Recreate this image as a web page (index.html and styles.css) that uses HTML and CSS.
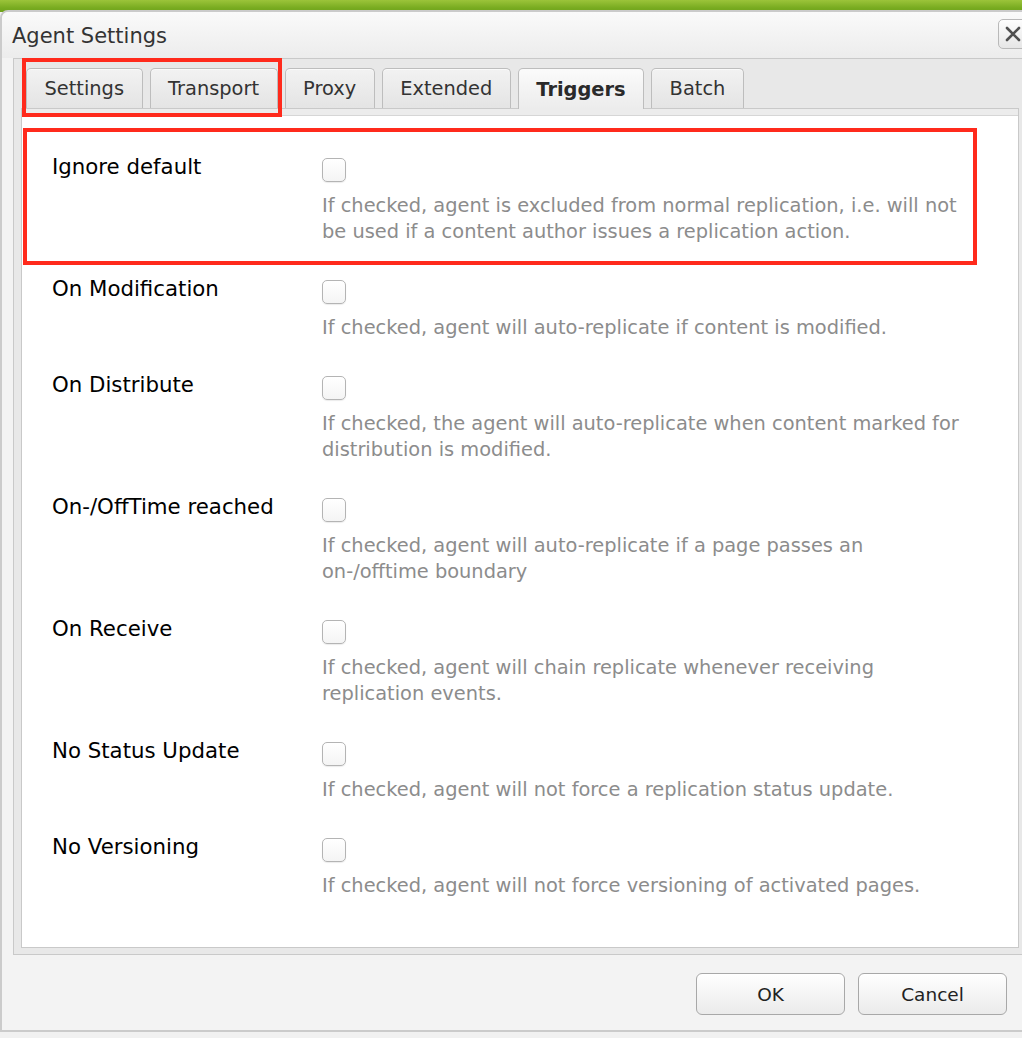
FILE: index.html
```html
<!DOCTYPE html>
<html lang="en">
<head>
<meta charset="utf-8">
<title>Agent Settings</title>
<link rel="stylesheet" href="styles.css">
</head>
<body>
<div class="screen">
  <div class="window">
    <div class="header">
      <span class="title">Agent Settings</span>
      <button class="close" aria-label="Close">
        <svg width="18" height="18" viewBox="0 0 18 18"><path d="M3 3 L15 15 M15 3 L3 15" stroke="#505050" stroke-width="2.6" stroke-linecap="round" fill="none"/></svg>
      </button>
    </div>
    <div class="panel">
      <div class="tabstrip">
        <div class="tab">Settings</div>
        <div class="tab">Transport</div>
        <div class="tab tab-proxy">Proxy</div>
        <div class="tab">Extended</div>
        <div class="tab active">Triggers</div>
        <div class="tab">Batch</div>
      </div>
      <div class="bodywrap">
        <div class="tabbody">
          <div class="row">
            <div class="label">Ignore default</div>
            <div class="field">
              <span class="checkbox"></span>
              <div class="desc">If checked, agent is excluded from normal replication, i.e. will not<br>be used if a content author issues a replication action.</div>
            </div>
          </div>
          <div class="row">
            <div class="label">On Modification</div>
            <div class="field">
              <span class="checkbox"></span>
              <div class="desc">If checked, agent will auto-replicate if content is modified.</div>
            </div>
          </div>
          <div class="row">
            <div class="label">On Distribute</div>
            <div class="field">
              <span class="checkbox"></span>
              <div class="desc">If checked, the agent will auto-replicate when content marked for<br>distribution is modified.</div>
            </div>
          </div>
          <div class="row">
            <div class="label">On-/OffTime reached</div>
            <div class="field">
              <span class="checkbox"></span>
              <div class="desc">If checked, agent will auto-replicate if a page passes an<br>on-/offtime boundary</div>
            </div>
          </div>
          <div class="row">
            <div class="label">On Receive</div>
            <div class="field">
              <span class="checkbox"></span>
              <div class="desc">If checked, agent will chain replicate whenever receiving<br>replication events.</div>
            </div>
          </div>
          <div class="row">
            <div class="label">No Status Update</div>
            <div class="field">
              <span class="checkbox"></span>
              <div class="desc">If checked, agent will not force a replication status update.</div>
            </div>
          </div>
          <div class="row">
            <div class="label">No Versioning</div>
            <div class="field">
              <span class="checkbox"></span>
              <div class="desc">If checked, agent will not force versioning of activated pages.</div>
            </div>
          </div>
        </div>
      </div>
    </div>
    <div class="footer">
      <button class="btn">OK</button>
      <button class="btn">Cancel</button>
    </div>
  </div>
  <div class="mark mark-tabs"></div>
  <div class="mark mark-row"></div>
</div>
</body>
</html>
```
FILE: styles.css
```css
html, body {
  margin: 0;
  padding: 0;
  overflow: hidden;
}
body {
  width: 1022px;
  height: 1038px;
  font-family: "DejaVu Sans", Verdana, sans-serif;
  background: #f0f0f0;
}
.screen {
  position: relative;
  width: 1022px;
  height: 1038px;
  overflow: hidden;
  background: linear-gradient(to bottom, #9cc43a 0, #78ab20 8px, #6fa31c 12px, #f1f1f1 12px);
}
.window {
  margin-top: 10px;
  width: 1040px;
  box-sizing: border-box;
  border: 2px solid #cbcbcb;
  border-radius: 8px 8px 0 0;
  background: #f3f3f3;
}
.header {
  height: 46px;
  display: flex;
  align-items: center;
  justify-content: space-between;
  padding: 0 10px;
  background: linear-gradient(to bottom, #fafafa, #ececec);
  border-radius: 6px 6px 0 0;
}
.title {
  font-size: 21px;
  color: #333;
  position: relative;
  top: 1px;
}
.close {
  width: 30px;
  height: 30px;
  margin-top: -2px;
  padding: 0;
  display: flex;
  align-items: center;
  justify-content: center;
  border: 1px solid #b9b9b9;
  border-radius: 5px;
  background: linear-gradient(to bottom, #fdfdfd, #e6e6e6);
}
.panel {
  margin: 0 11px;
  border: 1px solid #c9c9c9;
  background: #e8e8e8;
  padding: 0 7px 6px 7px;
}
.tabstrip {
  display: flex;
  gap: 7px;
  padding: 9px 0 0 5px;
  height: 40px;
}
.tab {
  height: 40px;
  box-sizing: border-box;
  padding: 0 17.5px;
  display: flex;
  align-items: center;
  justify-content: center;
  font-size: 19.4px;
  color: #333;
  border: 1px solid #bdbdbd;
  border-bottom: none;
  border-radius: 5px 5px 0 0;
  background: linear-gradient(to bottom, #f2f2f2, #e4e4e4);
  box-shadow: inset 0 1px 0 #fafafa;
}
.tab-proxy {
  min-width: 90px;
}
.tab.active {
  font-weight: bold;
  color: #2a2a2a;
  height: 41px;
  position: relative;
  z-index: 1;
  background: linear-gradient(to bottom, #fbfbfb, #ececec);
}
.bodywrap {
  border: 1px solid #c9c9c9;
  background: #ececec;
  padding-top: 6px;
}
.tabbody {
  height: 832px;
  box-sizing: border-box;
  background: #fff;
  border-top: 1px solid #d6d6d6;
  padding: 7px 0 0 30px;
}
.row {
  display: flex;
  padding-top: 35px;
}
.label {
  width: 270px;
  flex: none;
  font-size: 21.3px;
  line-height: 24px;
  margin-top: -3px;
  color: #000;
}
.field {
  display: flex;
  flex-direction: column;
  align-items: flex-start;
}
.checkbox {
  width: 24px;
  height: 24px;
  box-sizing: border-box;
  border: 1px solid #b4b4b4;
  border-radius: 5px;
  background: linear-gradient(to bottom, #ffffff, #f4f4f4);
  box-shadow: 0 1px 1px rgba(0,0,0,0.08);
}
.desc {
  margin-top: 11px;
  font-size: 19.4px;
  line-height: 26px;
  color: #8c8c8c;
  white-space: nowrap;
}
.footer {
  height: 75px;
  display: flex;
  justify-content: flex-end;
  align-items: flex-start;
  gap: 13px;
  padding: 18px 31px 0 0;
  box-sizing: border-box;
}
.btn {
  width: 149px;
  height: 42px;
  border: 1px solid #a8a8a8;
  border-radius: 6px;
  background: linear-gradient(to bottom, #ffffff, #ebebeb);
  box-shadow: inset 0 1px 0 #fff;
  font-family: "DejaVu Sans", Verdana, sans-serif;
  font-size: 18.5px;
  color: #222;
  padding: 0;
}
.mark {
  position: absolute;
  box-sizing: border-box;
  border: 4px solid #ff2a1c;
}
.mark-tabs {
  left: 22px;
  top: 58px;
  width: 260px;
  height: 59px;
}
.mark-row {
  left: 23px;
  top: 128px;
  width: 954px;
  height: 137px;
}
```
